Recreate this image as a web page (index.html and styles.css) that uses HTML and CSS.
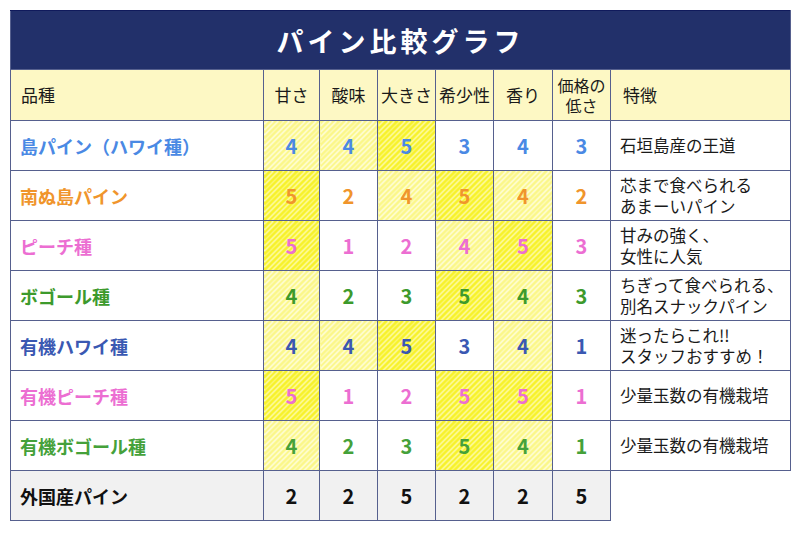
FILE: index.html
```html
<!DOCTYPE html>
<html lang="ja">
<head>
<meta charset="utf-8">
<title>パイン比較グラフ</title>
<link rel="stylesheet" href="styles.css">
</head>
<body>
<table class="chart">
  <colgroup>
    <col class="c-name"><col class="c-n1"><col class="c-n2"><col class="c-n3"><col class="c-n4"><col class="c-n5"><col class="c-n6"><col class="c-feat">
  </colgroup>
  <thead>
    <tr><th colspan="8" class="title">パイン比較グラフ</th></tr>
    <tr class="head">
      <th class="h-name">品種</th>
      <th>甘さ</th><th>酸味</th><th>大きさ</th><th>希少性</th><th>香り</th><th class="h-two">価格の<br>低さ</th>
      <th class="h-feat">特徴</th>
    </tr>
  </thead>
  <tbody>
    <tr class="blue">
      <td class="name">島パイン（ハワイ種）</td>
      <td class="num lt">4</td><td class="num lt">4</td><td class="num st">5</td><td class="num">3</td><td class="num">4</td><td class="num">3</td>
      <td class="feat">石垣島産の王道</td>
    </tr>
    <tr class="orange">
      <td class="name">南ぬ島パイン</td>
      <td class="num st">5</td><td class="num">2</td><td class="num lt">4</td><td class="num st">5</td><td class="num lt">4</td><td class="num">2</td>
      <td class="feat">芯まで食べられる<br>あまーいパイン</td>
    </tr>
    <tr class="pink">
      <td class="name">ピーチ種</td>
      <td class="num st">5</td><td class="num">1</td><td class="num">2</td><td class="num lt">4</td><td class="num st">5</td><td class="num">3</td>
      <td class="feat">甘みの強く、<br>女性に人気</td>
    </tr>
    <tr class="green">
      <td class="name">ボゴール種</td>
      <td class="num lt">4</td><td class="num">2</td><td class="num">3</td><td class="num st">5</td><td class="num lt">4</td><td class="num">3</td>
      <td class="feat">ちぎって食べられる、<br>別名スナックパイン</td>
    </tr>
    <tr class="navy">
      <td class="name">有機ハワイ種</td>
      <td class="num lt">4</td><td class="num lt">4</td><td class="num st">5</td><td class="num">3</td><td class="num lt">4</td><td class="num">1</td>
      <td class="feat">迷ったらこれ!!<br>スタッフおすすめ！</td>
    </tr>
    <tr class="pink">
      <td class="name">有機ピーチ種</td>
      <td class="num st">5</td><td class="num">1</td><td class="num">2</td><td class="num st">5</td><td class="num st">5</td><td class="num">1</td>
      <td class="feat">少量玉数の有機栽培</td>
    </tr>
    <tr class="green2">
      <td class="name">有機ボゴール種</td>
      <td class="num lt">4</td><td class="num">2</td><td class="num">3</td><td class="num st">5</td><td class="num lt">4</td><td class="num">1</td>
      <td class="feat">少量玉数の有機栽培</td>
    </tr>
    <tr class="foreign">
      <td class="name">外国産パイン</td>
      <td class="num">2</td><td class="num">2</td><td class="num">5</td><td class="num">2</td><td class="num">2</td><td class="num">5</td>
      <td class="empty"></td>
    </tr>
  </tbody>
</table>
</body>
</html>
```

FILE: styles.css
```css
html, body {
  margin: 0;
  padding: 0;
  background: #ffffff;
}
body {
  padding: 10px;
  font-family: "Noto Sans CJK JP", "Noto Sans", sans-serif;
  color: #1a1a1a;
}
.chart {
  border-collapse: collapse;
  table-layout: fixed;
  width: 780px;
}
.c-name { width: 253px; }
.c-n1 { width: 56px; }
.c-n2 { width: 58px; }
.c-n3 { width: 58px; }
.c-n4 { width: 58px; }
.c-n5 { width: 59px; }
.c-n6 { width: 58px; }
.c-feat { width: 180px; }

.chart th, .chart td {
  border: 1px solid #56608e;
  padding: 0;
}
.title {
  height: 58px;
  background: #22306a;
  border-top: 1px solid #101a5c !important;
  color: #ffffff;
  font-size: 27px;
  font-weight: 700;
  letter-spacing: 4px;
  text-align: center;
}
.head th {
  height: 50px;
  background: #fdf8c4;
  font-size: 17px;
  font-weight: 400;
  color: #1a1a1a;
  text-align: center;
  line-height: 20px;
}
.head .h-name {
  text-align: left;
  padding-left: 10px;
}
.head .h-feat {
  text-align: left;
  padding-left: 12px;
}
.head .h-two {
  font-size: 16px;
}
tbody td {
  height: 49px;
  background: #ffffff;
}
.name {
  padding-left: 9px !important;
  font-size: 18px;
  font-weight: 700;
}
.num {
  text-align: center;
  font-size: 20px;
  font-weight: 700;
}
.feat {
  padding-left: 9px !important;
  font-size: 16.5px;
  line-height: 21px;
  color: #1a1a1a;
}
.st {
  background: repeating-linear-gradient(-45deg, #f7f22c 0 2.5px, #fdfbb0 2.5px 3.8px) !important;
}
.lt {
  background: repeating-linear-gradient(-45deg, #fbf78a 0 2.5px, #fffde0 2.5px 3.8px) !important;
}
.blue { color: #4a89e4; }
.orange { color: #f0952c; }
.pink { color: #ec6ed2; }
.green { color: #3d9a2c; }
.navy { color: #3a58b2; }
.green2 { color: #45a13a; }
.foreign { color: #111111; }
.foreign td { background: #f1f1f1; }
.foreign .empty {
  background: #ffffff;
  border-right: none;
  border-bottom: none;
}
```
